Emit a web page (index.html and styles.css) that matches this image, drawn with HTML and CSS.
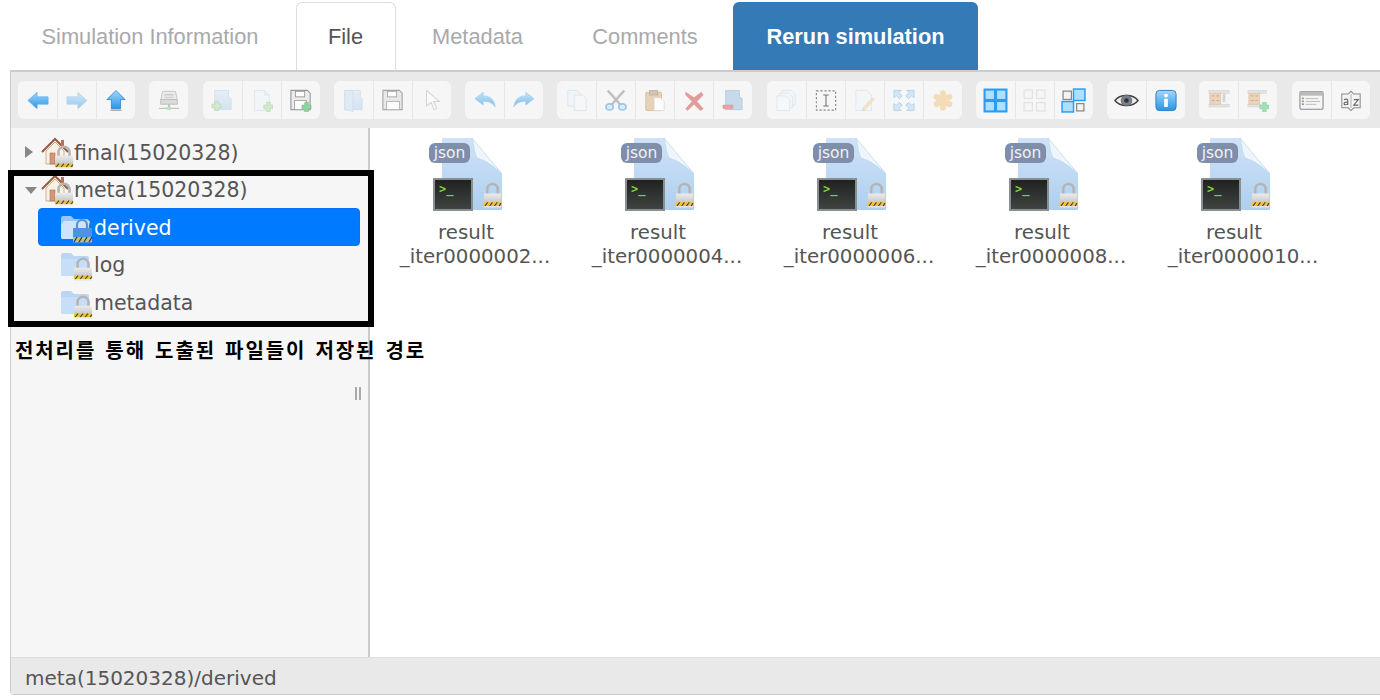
FILE: index.html
```html
<!DOCTYPE html>
<html lang="en">
<head>
<meta charset="utf-8">
<title>File browser</title>
<link rel="stylesheet" href="styles.css">
</head>
<body>
<svg class="defs" width="0" height="0" aria-hidden="true">
<defs>
  <linearGradient id="blueA" x1="0" y1="0" x2="0" y2="1"><stop offset="0" stop-color="#9fd8fb"/><stop offset="1" stop-color="#2b94e4"/></linearGradient>
  <linearGradient id="folderG" x1="0" y1="0" x2="0" y2="1"><stop offset="0" stop-color="#d3e5f7"/><stop offset="1" stop-color="#a9cbf0"/></linearGradient>
  <linearGradient id="docG" x1="0" y1="0" x2="0" y2="1"><stop offset="0" stop-color="#cfe3f6"/><stop offset="1" stop-color="#aecff0"/></linearGradient>
  <linearGradient id="lockG" x1="0" y1="0" x2="0" y2="1"><stop offset="0" stop-color="#ececec"/><stop offset="1" stop-color="#c6c6c6"/></linearGradient>

  <symbol id="i-back" viewBox="0 0 24 24"><path d="M1 12 11 3v5h12v8H11v5z" fill="url(#blueA)" stroke="#5fb1ea" stroke-width=".8"/></symbol>
  <symbol id="i-fwd" viewBox="0 0 24 24"><path d="M23 12 13 3v5H1v8h12v5z" fill="url(#blueA)" stroke="#5fb1ea" stroke-width=".8"/></symbol>
  <symbol id="i-up" viewBox="0 0 24 24"><path d="M12 1 22 11h-5v10H7V11H2z" fill="url(#blueA)" stroke="#1d7fc8" stroke-width=".8"/><rect x="6" y="22" width="12" height="1.400" fill="#777" opacity=".6"/></symbol>
  <symbol id="i-net" viewBox="0 0 24 24"><path d="M5 2h14l2 9H3z" fill="#ddd" stroke="#888"/><rect x="3" y="11" width="18" height="5" fill="#bbb" stroke="#777"/><rect x="7" y="5" width="10" height="1.500" fill="#999"/><rect x="7" y="8" width="10" height="1.500" fill="#aaa"/><rect x="1" y="20" width="22" height="1.200" fill="#777"/><rect x="11" y="16" width="2" height="4" fill="#777"/><ellipse cx="12" cy="20.500" rx="3" ry="2" fill="#7cc77c"/></symbol>
  <symbol id="i-newfolder" viewBox="0 0 24 24"><path d="M4 1h15v7l3 2v12H4z" fill="url(#folderG)" stroke="#9dbfe0" stroke-width=".8"/><path d="M4 17h3v-3h4v3h3v4h-3v3H7v-3H4z" transform="translate(-3 -1)" fill="#a5dc97" stroke="#6fb763" stroke-width=".7"/></symbol>
  <symbol id="i-newfile" viewBox="0 0 24 24"><path d="M4 1h11l5 5v17H4z" fill="#eef5fb" stroke="#b5d0e8" stroke-width=".9"/><path d="M15 1v5h5" fill="#d6e6f4" stroke="#b5d0e8" stroke-width=".8"/><path d="M14 17h3v-3h4v3h3v4h-3v3h-4v-3h-3z" fill="#a5dc97" stroke="#6fb763" stroke-width=".7"/></symbol>
  <symbol id="i-saveplus" viewBox="0 0 24 24"><path d="M1 1h18l3 3v18H1z" fill="#e8e8e8" stroke="#777" stroke-width="1.200"/><rect x="6" y="2" width="10" height="6" fill="#fff" stroke="#777"/><rect x="5" y="12" width="13" height="10" fill="#fff" stroke="#888"/><path d="M13 17h3v-3h4v3h3v4h-3v3h-4v-3h-3z" fill="#67c77a" stroke="#4aa25c" stroke-width=".6"/></symbol>
  <symbol id="i-folderopen" viewBox="0 0 24 24"><path d="M3 1h17v7l2 2v12H3z" fill="url(#folderG)" stroke="#9dbfe0" stroke-width=".8"/><path d="M3 1h8l1 3v20l-9-2z" fill="#c3dcf3" stroke="#9dbfe0" stroke-width=".8"/></symbol>
  <symbol id="i-save" viewBox="0 0 24 24"><path d="M1 1h18l3 3v18H1z" fill="#e4e4e4" stroke="#888" stroke-width="1.200"/><rect x="6" y="2" width="10" height="6" fill="#fff" stroke="#888"/><rect x="5" y="13" width="14" height="9" fill="#fff" stroke="#999"/></symbol>
  <symbol id="i-cursor" viewBox="0 0 24 24"><path d="M6 1v17l5-4 3 8 3-1-3-8h6z" fill="#fff" stroke="#aaa" stroke-width="1.100"/></symbol>
  <symbol id="i-undo" viewBox="0 0 24 24"><path d="M1 10 10 3v4c7 0 12 3 13 12-3-5-7-6-13-6v4z" fill="url(#blueA)" stroke="#5fb1ea" stroke-width=".7"/></symbol>
  <symbol id="i-redo" viewBox="0 0 24 24"><path d="M23 10 14 3v4C7 7 2 10 1 19c3-5 7-6 13-6v4z" fill="url(#blueA)" stroke="#5fb1ea" stroke-width=".7"/></symbol>
  <symbol id="i-copy" viewBox="0 0 24 24"><path d="M2 1h10l3 3v14H2z" fill="#eef5fb" stroke="#b5d0e8"/><path d="M9 6h9l4 4v13H9z" fill="#f4f9fd" stroke="#b5d0e8"/></symbol>
  <symbol id="i-cut" viewBox="0 0 24 24"><path d="M3 1 17 17M21 1 7 17" stroke="#a9a9a9" stroke-width="2.600" fill="none"/><ellipse cx="5" cy="19" rx="4" ry="3.400" fill="#d2e7f7" stroke="#72b3e3" stroke-width="1.800"/><ellipse cx="19" cy="19" rx="4" ry="3.400" fill="#d2e7f7" stroke="#72b3e3" stroke-width="1.800"/></symbol>
  <symbol id="i-paste" viewBox="0 0 24 24"><rect x="2" y="3" width="17" height="20" rx="1" fill="#e3c49e" stroke="#c9a77c"/><rect x="6" y="1" width="9" height="5" fill="#c5b39b" stroke="#a08e74" stroke-width=".7"/><path d="M11 9h7l4 4v10H11z" fill="#fff" stroke="#ccc" stroke-width=".7"/></symbol>
  <symbol id="i-del" viewBox="0 0 24 24"><path d="M3 3 12 9l8-6 2 3-7 7 7 8-3 2-7-7-7 7-2-2 7-8-7-7z" fill="#dd7a7a" stroke="#c96a6a" stroke-width=".6"/></symbol>
  <symbol id="i-rmfolder" viewBox="0 0 24 24"><path d="M4 1h15v7l3 2v12H4z" fill="#b6d0e8" stroke="#94b5d6" stroke-width=".8"/><rect x="1" y="17" width="11" height="4" rx="1" fill="#ee8080" stroke="#cf6a6a" stroke-width=".6"/></symbol>
  <symbol id="i-dup" viewBox="0 0 24 24"><path d="M8 1h10l4 4v12H8z" fill="#f1f6fb" stroke="#c2d5e6"/><path d="M5 4h10l4 4v12H5z" fill="#f4f8fc" stroke="#c2d5e6"/><path d="M2 7h10l4 4v12H2z" fill="#f7fafd" stroke="#c2d5e6"/></symbol>
  <symbol id="i-rename" viewBox="0 0 24 24"><rect x="1.500" y="1.500" width="21" height="21" fill="none" stroke="#888" stroke-width="1.200" stroke-dasharray="2.400 2"/><path d="M9 6h6M9 18h6M12 6v12" stroke="#777" stroke-width="1.200" fill="none"/></symbol>
  <symbol id="i-edit" viewBox="0 0 24 24"><path d="M2 1h12l5 5v17H2z" fill="#f1f6fb" stroke="#c2d5e6"/><path d="M22 11 12 22l-3 1 1-3L20 9z" fill="#f2d68d" stroke="#c7a762" stroke-width=".7"/></symbol>
  <symbol id="i-resize" viewBox="0 0 24 24"><g fill="#bcdcf4" stroke="#7fbbe8" stroke-width="1"><path d="M1 1h8L6.500 3.500 10 7 7 10 3.500 6.500 1 9z"/><path d="M23 1h-8l2.500 2.500L14 7l3 3 3.500-3.500L23 9z"/><path d="M1 23h8l-2.500-2.500L10 17l-3-3-3.500 3.500L1 15z"/><path d="M23 23h-8l2.500-2.500L14 17l3-3 3.500 3.500L23 15z"/></g></symbol>
  <symbol id="i-ext" viewBox="0 0 24 24"><g stroke="#f3dcb8" stroke-width="6.500" stroke-linecap="round"><path d="M12 4v16M5 8l14 8M19 8 5 16"/></g></symbol>
  <symbol id="i-large" viewBox="0 0 24 24"><rect x=".5" y=".5" width="23" height="23" fill="#2d9bf0"/><g fill="#aee0fd"><rect x="2.500" y="2.500" width="8" height="8"/><rect x="13.500" y="2.500" width="8" height="8"/><rect x="2.500" y="13.500" width="8" height="8"/><rect x="13.500" y="13.500" width="8" height="8"/></g></symbol>
  <symbol id="i-small" viewBox="0 0 24 24"><g fill="#f6f6f6" stroke="#ccc" stroke-width="1.200"><rect x="2" y="2" width="8" height="8"/><rect x="14" y="2" width="8" height="8"/><rect x="2" y="14" width="8" height="8"/><rect x="14" y="14" width="8" height="8"/></g></symbol>
  <symbol id="i-mixed" viewBox="0 0 24 24"><rect x="2" y="3" width="8" height="8" fill="#f4f4f4" stroke="#888" stroke-width="1.200"/><rect x="12" y="1" width="11" height="11" fill="#aee0fd" stroke="#2d9bf0" stroke-width="1.400"/><rect x="1" y="13" width="11" height="10" fill="#aee0fd" stroke="#2d9bf0" stroke-width="1.400"/><rect x="15" y="15" width="7" height="7" fill="#f4f4f4" stroke="#888" stroke-width="1.200"/></symbol>
  <symbol id="i-eye" viewBox="0 0 26 24"><path d="M1 12C6 5 20 5 25 12 20 19 6 19 1 12z" fill="#eee" stroke="#444" stroke-width="1.500"/><circle cx="13" cy="12" r="5.600" fill="#77808f" stroke="#555" stroke-width=".6"/><circle cx="13" cy="12" r="2.400" fill="#333"/></symbol>
  <symbol id="i-info" viewBox="0 0 24 24"><rect x="1" y="1" width="22" height="22" rx="4" fill="url(#blueA)" stroke="#2a78c2"/><rect x="10" y="10" width="4" height="9" rx=".6" fill="#fff"/><circle cx="12" cy="6.600" r="2.100" fill="#fff"/></symbol>
  <symbol id="i-zip" viewBox="0 0 24 24"><rect x="1" y="1" width="22" height="3" fill="#ddd" stroke="#bbb" stroke-width=".5"/><rect x="1" y="16" width="22" height="3" fill="#ddd" stroke="#bbb" stroke-width=".5"/><rect x="2" y="4" width="12" height="12" fill="#e6c7a3" stroke="#d2ac80" stroke-width=".6"/><path d="M4 7h3M9 7h3M4 12h3M9 12h3" stroke="#b68c5e"/><path d="M16 5h3l-3 2h3l-3 2h3l-3 2h3l-3 2h3" fill="none" stroke="#aaa" stroke-width=".7"/></symbol>
  <symbol id="i-unzip" viewBox="0 0 24 24"><rect x="1" y="1" width="20" height="3" fill="#ddd" stroke="#bbb" stroke-width=".5"/><rect x="1" y="16" width="14" height="3" fill="#ddd" stroke="#bbb" stroke-width=".5"/><rect x="2" y="4" width="12" height="12" fill="#e6c7a3" stroke="#d2ac80" stroke-width=".6"/><path d="M4 7h3M9 7h3M4 12h3M9 12h3" stroke="#b68c5e"/><path d="M14 17h3v-3h4v3h3v4h-3v3h-4v-3h-3z" fill="#82dc9a" stroke="#5db776" stroke-width=".6"/></symbol>
  <symbol id="i-list" viewBox="0 0 26 24"><rect x="1" y="3" width="24" height="18" rx="1" fill="#f5f5f5" stroke="#888" stroke-width="1.100"/><rect x="1" y="3" width="24" height="4" fill="#bbb"/><rect x="3" y="9" width="2" height="1.600" fill="#56b74e"/><rect x="3" y="12" width="2" height="1.600" fill="#d96a6a"/><rect x="3" y="15" width="2" height="1.600" fill="#5a90e0"/><path d="M7 10h13M7 13h15M7 16h11" stroke="#bbb"/></symbol>
  <symbol id="i-az" viewBox="0 0 24 24"><path d="M2 5h7l3-3 3 3h7v15h-7l-3 3-3-3H2z" fill="#f5f5f5" stroke="#888" stroke-width="1.100"/><path d="M12 5v15" stroke="#aaa"/><path d="M4.500 11.500c1-1.600 4-1.200 4 .5V17M8.500 14c-3-.8-4.500.4-4 1.800.4 1.300 3 1.200 4-.5M15 11h5l-5 6h5" fill="none" stroke="#666" stroke-width="1.200"/></symbol>

  <symbol id="i-lock" viewBox="0 0 20 27" preserveAspectRatio="none"><path d="M4.500 13V7.500a5.500 5.500 0 0 1 11 0V13" fill="none" stroke="#b4b4b4" stroke-width="2.600"/><rect x="1" y="12" width="18" height="10" rx="1" fill="url(#lockG)"/><rect x="1" y="21" width="18" height="4" fill="#eec23c"/><path d="M2 25l3-4M7 25l3-4M12 25l3-4M17 25l2-3" stroke="#444" stroke-width="1.200"/><rect x="1" y="25" width="18" height="1.500" fill="#e6e6e6"/></symbol>
  <symbol id="i-home" viewBox="0 0 34 32"><path d="M1 15 14 2l13 13" fill="none" stroke="#9a5a3e" stroke-width="2"/><path d="M5 14 14 5l9 9v13H5z" fill="#fbf1e3" stroke="#c6a68c" stroke-width=".9"/><rect x="9" y="16" width="5" height="11" fill="#d49777" stroke="#a9704f" stroke-width=".6"/><rect x="20" y="3" width="3" height="7" fill="#b87252"/><use href="#i-lock" x="13" y="8" width="20" height="24"/></symbol>
  <symbol id="i-folder" viewBox="0 0 34 32"><path d="M0 6a2 2 0 0 1 2-2h8l3 3h13a2 2 0 0 1 2 2v18H2a2 2 0 0 1-2-2z" fill="#b9d6f5"/><path d="M0 10h28v17H2a2 2 0 0 1-2-2z" fill="#c9e0f8" opacity=".8"/><use href="#i-lock" x="12" y="8" width="20" height="24"/></symbol>
  <symbol id="i-folder-sel" viewBox="0 0 34 32"><path d="M0 6a2 2 0 0 1 2-2h8l3 3h13a2 2 0 0 1 2 2v18H2a2 2 0 0 1-2-2z" fill="#9cc5f2"/><path d="M0 13 3 9h26l-4 18H2a2 2 0 0 1-2-2z" fill="#cfe3fa"/><path d="M16 17v-4a5 5 0 0 1 10 0v4" fill="none" stroke="#5d8fca" stroke-width="2.200"/><rect x="12" y="16" width="19" height="15" fill="#4c93e6"/><rect x="12" y="25" width="19" height="5" fill="#b9c27a"/><path d="M13 30l3-5M18 30l3-5M23 30l3-5M28 30l3-5" stroke="#333" stroke-width="1.200"/></symbol>
  <symbol id="i-file" viewBox="0 0 60 72"><path d="M0 0h30l30 36v36H0z" fill="url(#docG)"/><path d="M30 0c2 8 3 16 5 20 8 2 17 8 25 16z" fill="#eef6fc" stroke="#b9d5ee" stroke-width=".6"/></symbol>
</defs>
</svg>

<main class="app">
  <nav class="tabs">
    <a class="tab tab-info">Simulation Information</a>
    <a class="tab tab-file">File</a>
    <a class="tab tab-meta">Metadata</a>
    <a class="tab tab-comments">Comments</a>
    <a class="tab tab-rerun">Rerun simulation</a>
  </nav>

  <section class="panel">
    <div class="toolbar">
      <div class="group">
        <button class="tb"><svg class="ic"><use href="#i-back"/></svg></button>
        <button class="tb off"><svg class="ic"><use href="#i-fwd"/></svg></button>
        <button class="tb"><svg class="ic"><use href="#i-up"/></svg></button>
      </div>
      <div class="group">
        <button class="tb off"><svg class="ic"><use href="#i-net"/></svg></button>
      </div>
      <div class="group">
        <button class="tb off"><svg class="ic"><use href="#i-newfolder"/></svg></button>
        <button class="tb off"><svg class="ic"><use href="#i-newfile"/></svg></button>
        <button class="tb semi"><svg class="ic"><use href="#i-saveplus"/></svg></button>
      </div>
      <div class="group">
        <button class="tb off"><svg class="ic"><use href="#i-folderopen"/></svg></button>
        <button class="tb semi"><svg class="ic"><use href="#i-save"/></svg></button>
        <button class="tb off"><svg class="ic"><use href="#i-cursor"/></svg></button>
      </div>
      <div class="group">
        <button class="tb mid"><svg class="ic"><use href="#i-undo"/></svg></button>
        <button class="tb mid"><svg class="ic"><use href="#i-redo"/></svg></button>
      </div>
      <div class="group">
        <button class="tb off"><svg class="ic"><use href="#i-copy"/></svg></button>
        <button class="tb semi"><svg class="ic"><use href="#i-cut"/></svg></button>
        <button class="tb semi"><svg class="ic"><use href="#i-paste"/></svg></button>
        <button class="tb semi"><svg class="ic"><use href="#i-del"/></svg></button>
        <button class="tb semi"><svg class="ic"><use href="#i-rmfolder"/></svg></button>
      </div>
      <div class="group">
        <button class="tb off"><svg class="ic"><use href="#i-dup"/></svg></button>
        <button class="tb"><svg class="ic"><use href="#i-rename"/></svg></button>
        <button class="tb off"><svg class="ic"><use href="#i-edit"/></svg></button>
        <button class="tb mid"><svg class="ic"><use href="#i-resize"/></svg></button>
        <button class="tb"><svg class="ic"><use href="#i-ext"/></svg></button>
      </div>
      <div class="group">
        <button class="tb"><svg class="ic ic-lg"><use href="#i-large"/></svg></button>
        <button class="tb off"><svg class="ic ic-lg"><use href="#i-small"/></svg></button>
        <button class="tb"><svg class="ic ic-lg"><use href="#i-mixed"/></svg></button>
      </div>
      <div class="group">
        <button class="tb"><svg class="ic ic-lg"><use href="#i-eye"/></svg></button>
        <button class="tb"><svg class="ic"><use href="#i-info"/></svg></button>
      </div>
      <div class="group">
        <button class="tb semi"><svg class="ic"><use href="#i-zip"/></svg></button>
        <button class="tb semi"><svg class="ic"><use href="#i-unzip"/></svg></button>
      </div>
      <div class="group">
        <button class="tb"><svg class="ic ic-lg"><use href="#i-list"/></svg></button>
        <button class="tb"><svg class="ic"><use href="#i-az"/></svg></button>
      </div>
    </div>

    <div class="body">
      <aside class="tree">
        <div class="row"><span class="arrow closed"></span><svg class="node"><use href="#i-home"/></svg><span class="label">final(15020328)</span></div>
        <div class="row"><span class="arrow open"></span><svg class="node"><use href="#i-home"/></svg><span class="label">meta(15020328)</span></div>
        <div class="row child selected"><svg class="node"><use href="#i-folder-sel"/></svg><span class="label">derived</span></div>
        <div class="row child"><svg class="node"><use href="#i-folder"/></svg><span class="label">log</span></div>
        <div class="row child"><svg class="node"><use href="#i-folder"/></svg><span class="label">metadata</span></div>
        <span class="grip"></span>
      </aside>
      <div class="files">
        <figure class="file"><div class="thumb"><svg class="doc"><use href="#i-file"/></svg><span class="badge">json</span><span class="term"><span class="prompt">&gt;_</span></span><svg class="flock"><use href="#i-lock"/></svg></div><figcaption>result<span class="l2">_iter0000002...</span></figcaption></figure>
        <figure class="file"><div class="thumb"><svg class="doc"><use href="#i-file"/></svg><span class="badge">json</span><span class="term"><span class="prompt">&gt;_</span></span><svg class="flock"><use href="#i-lock"/></svg></div><figcaption>result<span class="l2">_iter0000004...</span></figcaption></figure>
        <figure class="file"><div class="thumb"><svg class="doc"><use href="#i-file"/></svg><span class="badge">json</span><span class="term"><span class="prompt">&gt;_</span></span><svg class="flock"><use href="#i-lock"/></svg></div><figcaption>result<span class="l2">_iter0000006...</span></figcaption></figure>
        <figure class="file"><div class="thumb"><svg class="doc"><use href="#i-file"/></svg><span class="badge">json</span><span class="term"><span class="prompt">&gt;_</span></span><svg class="flock"><use href="#i-lock"/></svg></div><figcaption>result<span class="l2">_iter0000008...</span></figcaption></figure>
        <figure class="file"><div class="thumb"><svg class="doc"><use href="#i-file"/></svg><span class="badge">json</span><span class="term"><span class="prompt">&gt;_</span></span><svg class="flock"><use href="#i-lock"/></svg></div><figcaption>result<span class="l2">_iter0000010...</span></figcaption></figure>
      </div>
    </div>

    <footer class="status">meta(15020328)/derived</footer>
  </section>

  <div class="callout"></div>
  <p class="note">전처리를 통해 도출된 파일들이 저장된 경로</p>
</main>
</body>
</html>
```

FILE: styles.css
```css
* { box-sizing: border-box; }
html, body { margin: 0; height: 100%; background: #fff; overflow: hidden; }
body { font-family: "DejaVu Sans", sans-serif; }
.defs { position: absolute; }
.app { position: relative; width: 1380px; height: 700px; padding-left: 10px; display: flex; flex-direction: column; }

.tabs { height: 70px; display: flex; align-items: flex-end; font-family: "Liberation Sans", Arial, sans-serif; font-size: 21.800px; }
.tab { height: 68px; display: flex; align-items: center; justify-content: center; padding-top: 1px; color: #a9a9ad; border-radius: 6px 6px 0 0; }
.tab-info { width: 286px; padding-right: 6px; }
.tab-file { width: 100px; color: #555; border: 1px solid #ddd; border-bottom: 0; background: #fff; padding-right: 1px; }
.tab-meta { width: 164px; padding-right: 1px; }
.tab-comments { width: 173px; padding-right: 3px; }
.tab-rerun { width: 245px; color: #fff; font-weight: 700; background: #337ab7; }

.panel { width: 1370px; height: 625px; display: flex; flex-direction: column; border-top: 2px solid #ccc; border-left: 1px solid #ccc; border-bottom: 1px solid #c8c8c8; border-bottom-left-radius: 4px; }
.toolbar { height: 56px; flex: none; display: flex; align-items: flex-start; gap: 14.250px; padding: 9px 0 0 7px; background: #e9e9e9; }
.group { display: flex; height: 38px; background: #f6f6f6; border-radius: 6px; }
.tb { width: 39px; height: 38px; padding: 0; border: 0; border-left: 1px solid #e6e6e6; background: transparent; display: flex; align-items: center; justify-content: center; }
.tb:first-child { border-left: 0; }
.ic { width: 22px; height: 23px; }
.ic-lg { width: 25px; height: 25px; }
.off .ic { opacity: .45; }
.mid .ic { opacity: .58; }
.semi .ic { opacity: .72; }

.body { flex: 1; display: flex; min-height: 0; }
.tree { position: relative; width: 359px; flex: none; background: #f6f6f6; border-right: 2px solid #ccc; padding: 6px 8px 0 0; color: #555; font-size: 20.500px; }
.row { height: 37.500px; display: flex; align-items: center; position: relative; padding-left: 30px; white-space: nowrap; }
.row .label { margin-left: -1px; }
.arrow { position: absolute; left: 14px; top: 12px; width: 0; height: 0; border-style: solid; }
.arrow.closed { border-width: 6px 0 6px 8px; border-color: transparent transparent transparent #888; }
.arrow.open { top: 15px; border-width: 7px 6px 0 6px; border-color: #888 transparent transparent transparent; }
.node { width: 34px; height: 32px; flex: none; }
.child { margin-left: 27px; padding-left: 22px; border: 1px solid transparent; border-radius: 4px; }
.selected { background: #007bff; border-color: #0d6efd; color: #fff; margin-top: -1px; margin-bottom: 1px; padding-top: 2px; }
.grip { position: absolute; left: 344px; top: 259px; width: 6px; height: 13px; border-left: 2px solid #aaa; border-right: 2px solid #aaa; }

.files { flex: 1; display: flex; align-items: flex-start; background: #fff; }
.file { margin: 0; width: 192px; padding-top: 9px; text-align: center; color: #555; font-size: 19.800px; line-height: 24px; }
.thumb { position: relative; width: 74px; height: 76px; margin: 0 auto 8px; left: 1px; }
.doc { position: absolute; left: 12px; top: 1px; width: 60px; height: 72px; }
.badge { position: absolute; left: -1px; top: 6px; width: 41px; height: 20px; border-radius: 6px; background: #7f8fa9; color: #eef2f6; font-size: 15.500px; line-height: 20px; }
.term { position: absolute; left: 3px; top: 41px; width: 40px; height: 33px; background: linear-gradient(#1f2221, #3f4342); border: 2px solid #8b8f8c; text-align: left; }
.prompt { position: absolute; left: 4px; top: 2px; font-size: 12px; line-height: 14px; color: #7fd13b; font-weight: 700; font-family: "DejaVu Sans Mono", monospace; }
.flock { position: absolute; left: 53px; top: 45px; width: 19px; height: 26px; }
.l2 { display: block; padding-left: 18px; white-space: nowrap; }

.status { height: 37px; flex: none; background: #e9e9e9; border-top: 1px solid #ddd; color: #555; font-size: 20px; line-height: 40px; padding-left: 14px; }

.callout { position: absolute; left: 8px; top: 170px; width: 366px; height: 157px; border: 6px solid #000; }
.note { position: absolute; left: 15px; top: 336px; margin: 0; font-family: "Noto Sans CJK KR", sans-serif; font-weight: 700; font-size: 20px; letter-spacing: 1.900px; word-spacing: 2.700px; line-height: 28px; color: #000; white-space: nowrap; }
```
